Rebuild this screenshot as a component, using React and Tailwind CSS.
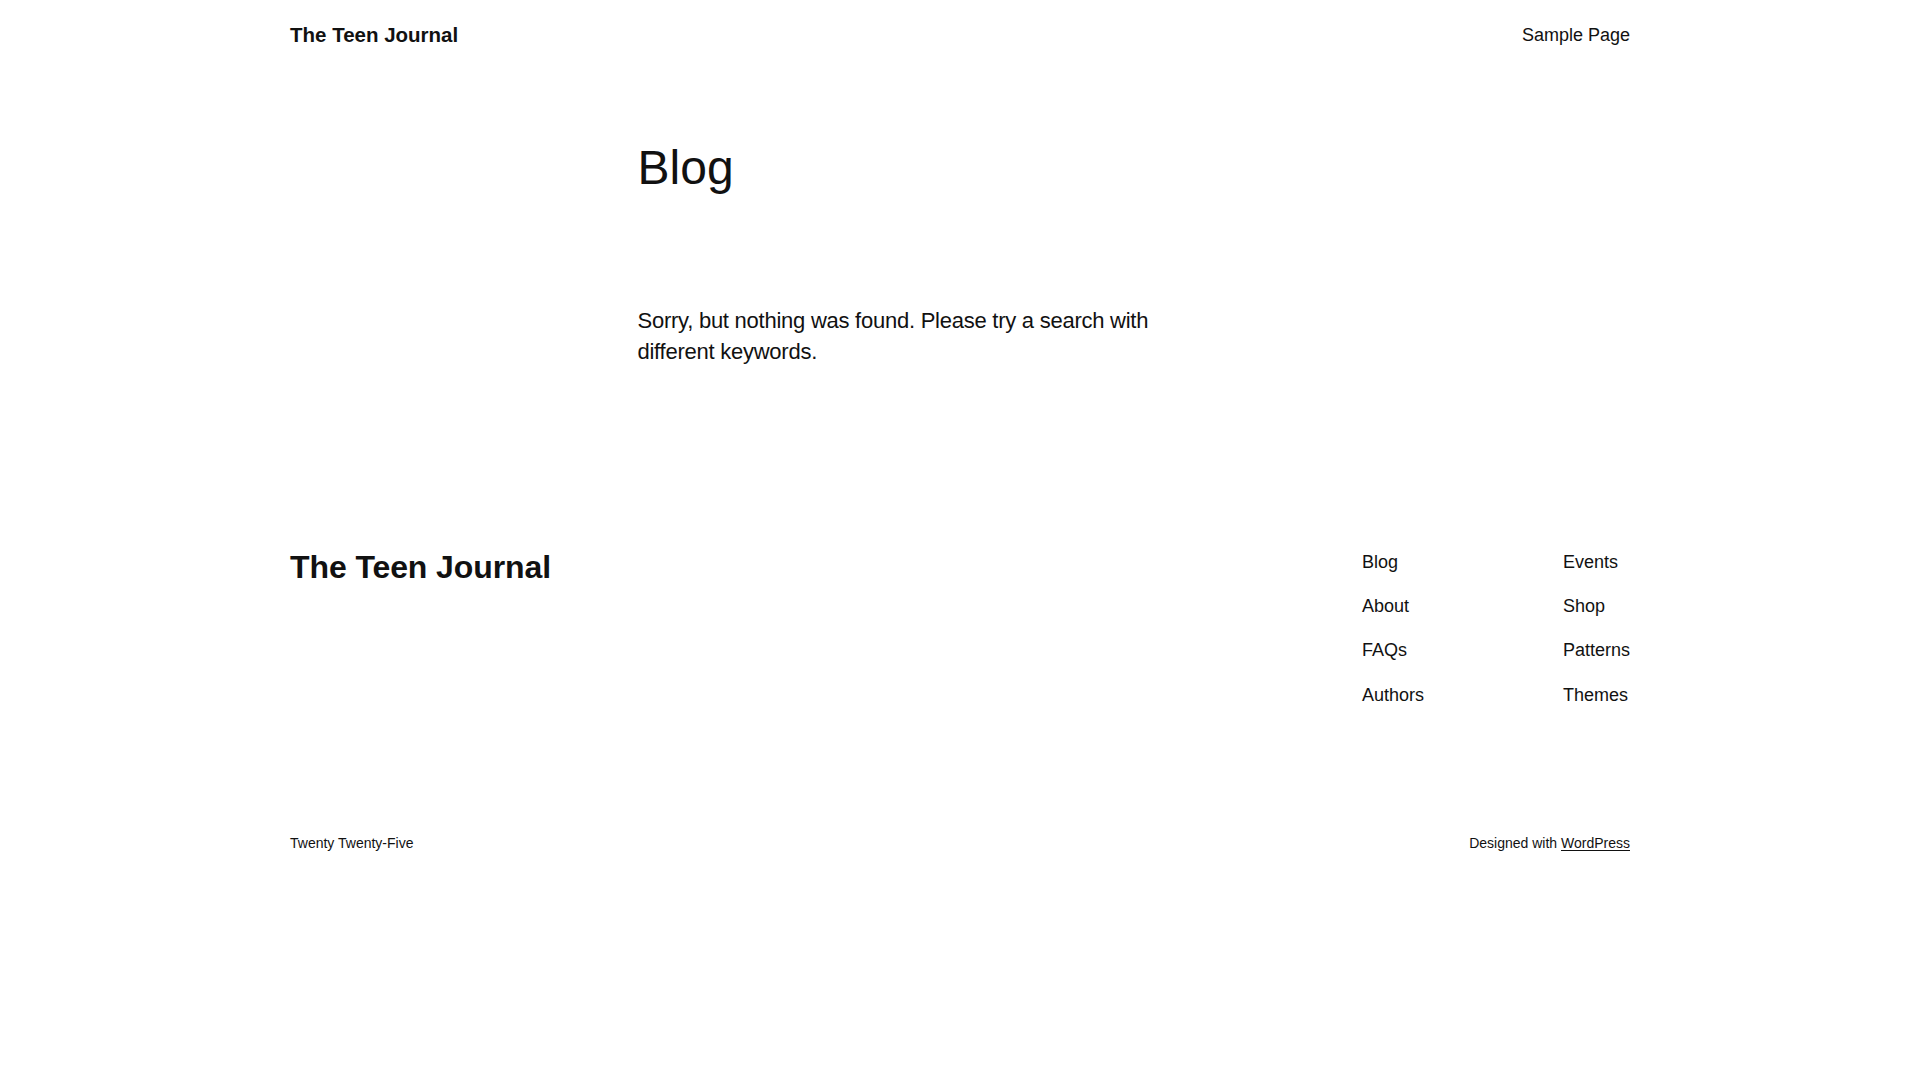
const leftLinks = ['Blog', 'About', 'FAQs', 'Authors']
const rightLinks = ['Events', 'Shop', 'Patterns', 'Themes']

function NavColumn({ links, className = '' }) {
  return (
    <ul className={`flex flex-col gap-[18.2px] ${className}`}>
      {links.map((l) => (
        <li key={l}>
          <a href="#" className="block text-[18px] leading-[26px]">
            {l}
          </a>
        </li>
      ))}
    </ul>
  )
}

export default function App() {
  return (
    <div className="min-h-screen bg-white text-[#111111] font-['Liberation_Sans',Arial,sans-serif]">
      <header className="w-[1340px] mx-auto pt-[21px] flex items-center justify-between">
        <a href="#" className="text-[20.5px] leading-[28px] font-bold">
          The Teen Journal
        </a>
        <nav>
          <a href="#" className="text-[18px] leading-[28px]">
            Sample Page
          </a>
        </nav>
      </header>

      <main className="w-[645px] mx-auto pt-[90px]">
        <h1 className="text-[48px] leading-[58px] font-normal">Blog</h1>
        <p className="mt-[108px] max-w-[560px] text-[22px] leading-[31px] tracking-[-0.25px]">
          Sorry, but nothing was found. Please try a search with different keywords.
        </p>
      </main>

      <footer className="w-[1340px] mx-auto pt-[181px]">
        <div className="flex items-start justify-between">
          <a href="#" className="text-[32px] leading-[38px] font-bold tracking-[-0.1px]">
            The Teen Journal
          </a>
          <div className="flex pt-px">
            <NavColumn links={leftLinks} className="w-[201px]" />
            <NavColumn links={rightLinks} />
          </div>
        </div>

        <div className="mt-[125px] flex items-center justify-between text-[14px] leading-[20px]">
          <p>Twenty Twenty-Five</p>
          <p>
            Designed with{' '}
            <a href="#" className="underline underline-offset-2">
              WordPress
            </a>
          </p>
        </div>
      </footer>
    </div>
  )
}
